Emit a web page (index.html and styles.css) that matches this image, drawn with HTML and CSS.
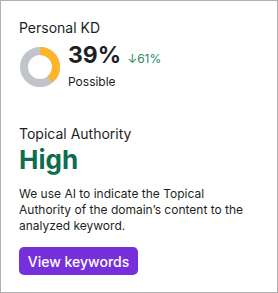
FILE: index.html
```html
<!DOCTYPE html>
<html>
<head>
<meta charset="utf-8">
<link rel="stylesheet" href="styles.css">
</head>
<body>
<div class="card">
  <div class="title">Personal KD</div>
  <div class="kd-row">
    <svg class="donut" width="40" height="40" viewBox="0 0 40 40">
      <circle cx="20" cy="20" r="16" fill="none" stroke="#c2c4cb" stroke-width="8"/>
      <circle cx="20" cy="20" r="16" fill="none" stroke="#ffb42c" stroke-width="8" stroke-dasharray="39.2 100.5" transform="rotate(-90 20 20)"/>
    </svg>
    <div class="kd-info">
      <div class="kd-values"><span class="kd-big">39%</span><span class="kd-delta">↓61%</span></div>
      <div class="kd-label">Possible</div>
    </div>
  </div>
  <div class="title ta-title">Topical Authority</div>
  <div class="ta-value">High</div>
  <p class="desc">We use AI to indicate the Topical Authority of the domain’s content to the analyzed keyword.</p>
  <button class="btn">View keywords</button>
</div>
</body>
</html>
```
FILE: styles.css
```css
html, body { margin: 0; padding: 0; background: #fff; }
body { font-family: Inter, "Noto Sans", sans-serif; color: #1d1f24; }
.card {
  width: 278px; height: 293px; box-sizing: border-box;
  border: 1px solid #b0b0b0;
  padding: 18px 18px 0 18px;
}
.title { font-size: 14px; line-height: 18px; }
.kd-row { display: flex; align-items: center; gap: 8px; margin-top: 6px; padding-left: 1px; }
.donut { display: block; }
.kd-info { display: flex; flex-direction: column; gap: 7px; }
.kd-values { display: flex; align-items: baseline; gap: 6px; height: 24px; }
.kd-big { font-size: 23px; font-weight: 700; line-height: 24px; }
.kd-delta { font-size: 12px; color: #2b8a5f; line-height: 16px; }
.kd-label { font-size: 12px; line-height: 16px; }
.ta-title { margin-top: 35px; }
.ta-value { font-size: 26px; font-weight: 700; color: #0e6c4f; line-height: 30px; margin-top: 2px; }
.desc { font-size: 12px; line-height: 16px; margin: 11px 0 0 0; }
.btn {
  display: block; margin-top: 13px; width: 119px; height: 28px;
  background: #7530dc; color: #fff; border: none; border-radius: 5px;
  font-family: inherit; font-size: 14px; font-weight: 500; padding: 0;
}
```
